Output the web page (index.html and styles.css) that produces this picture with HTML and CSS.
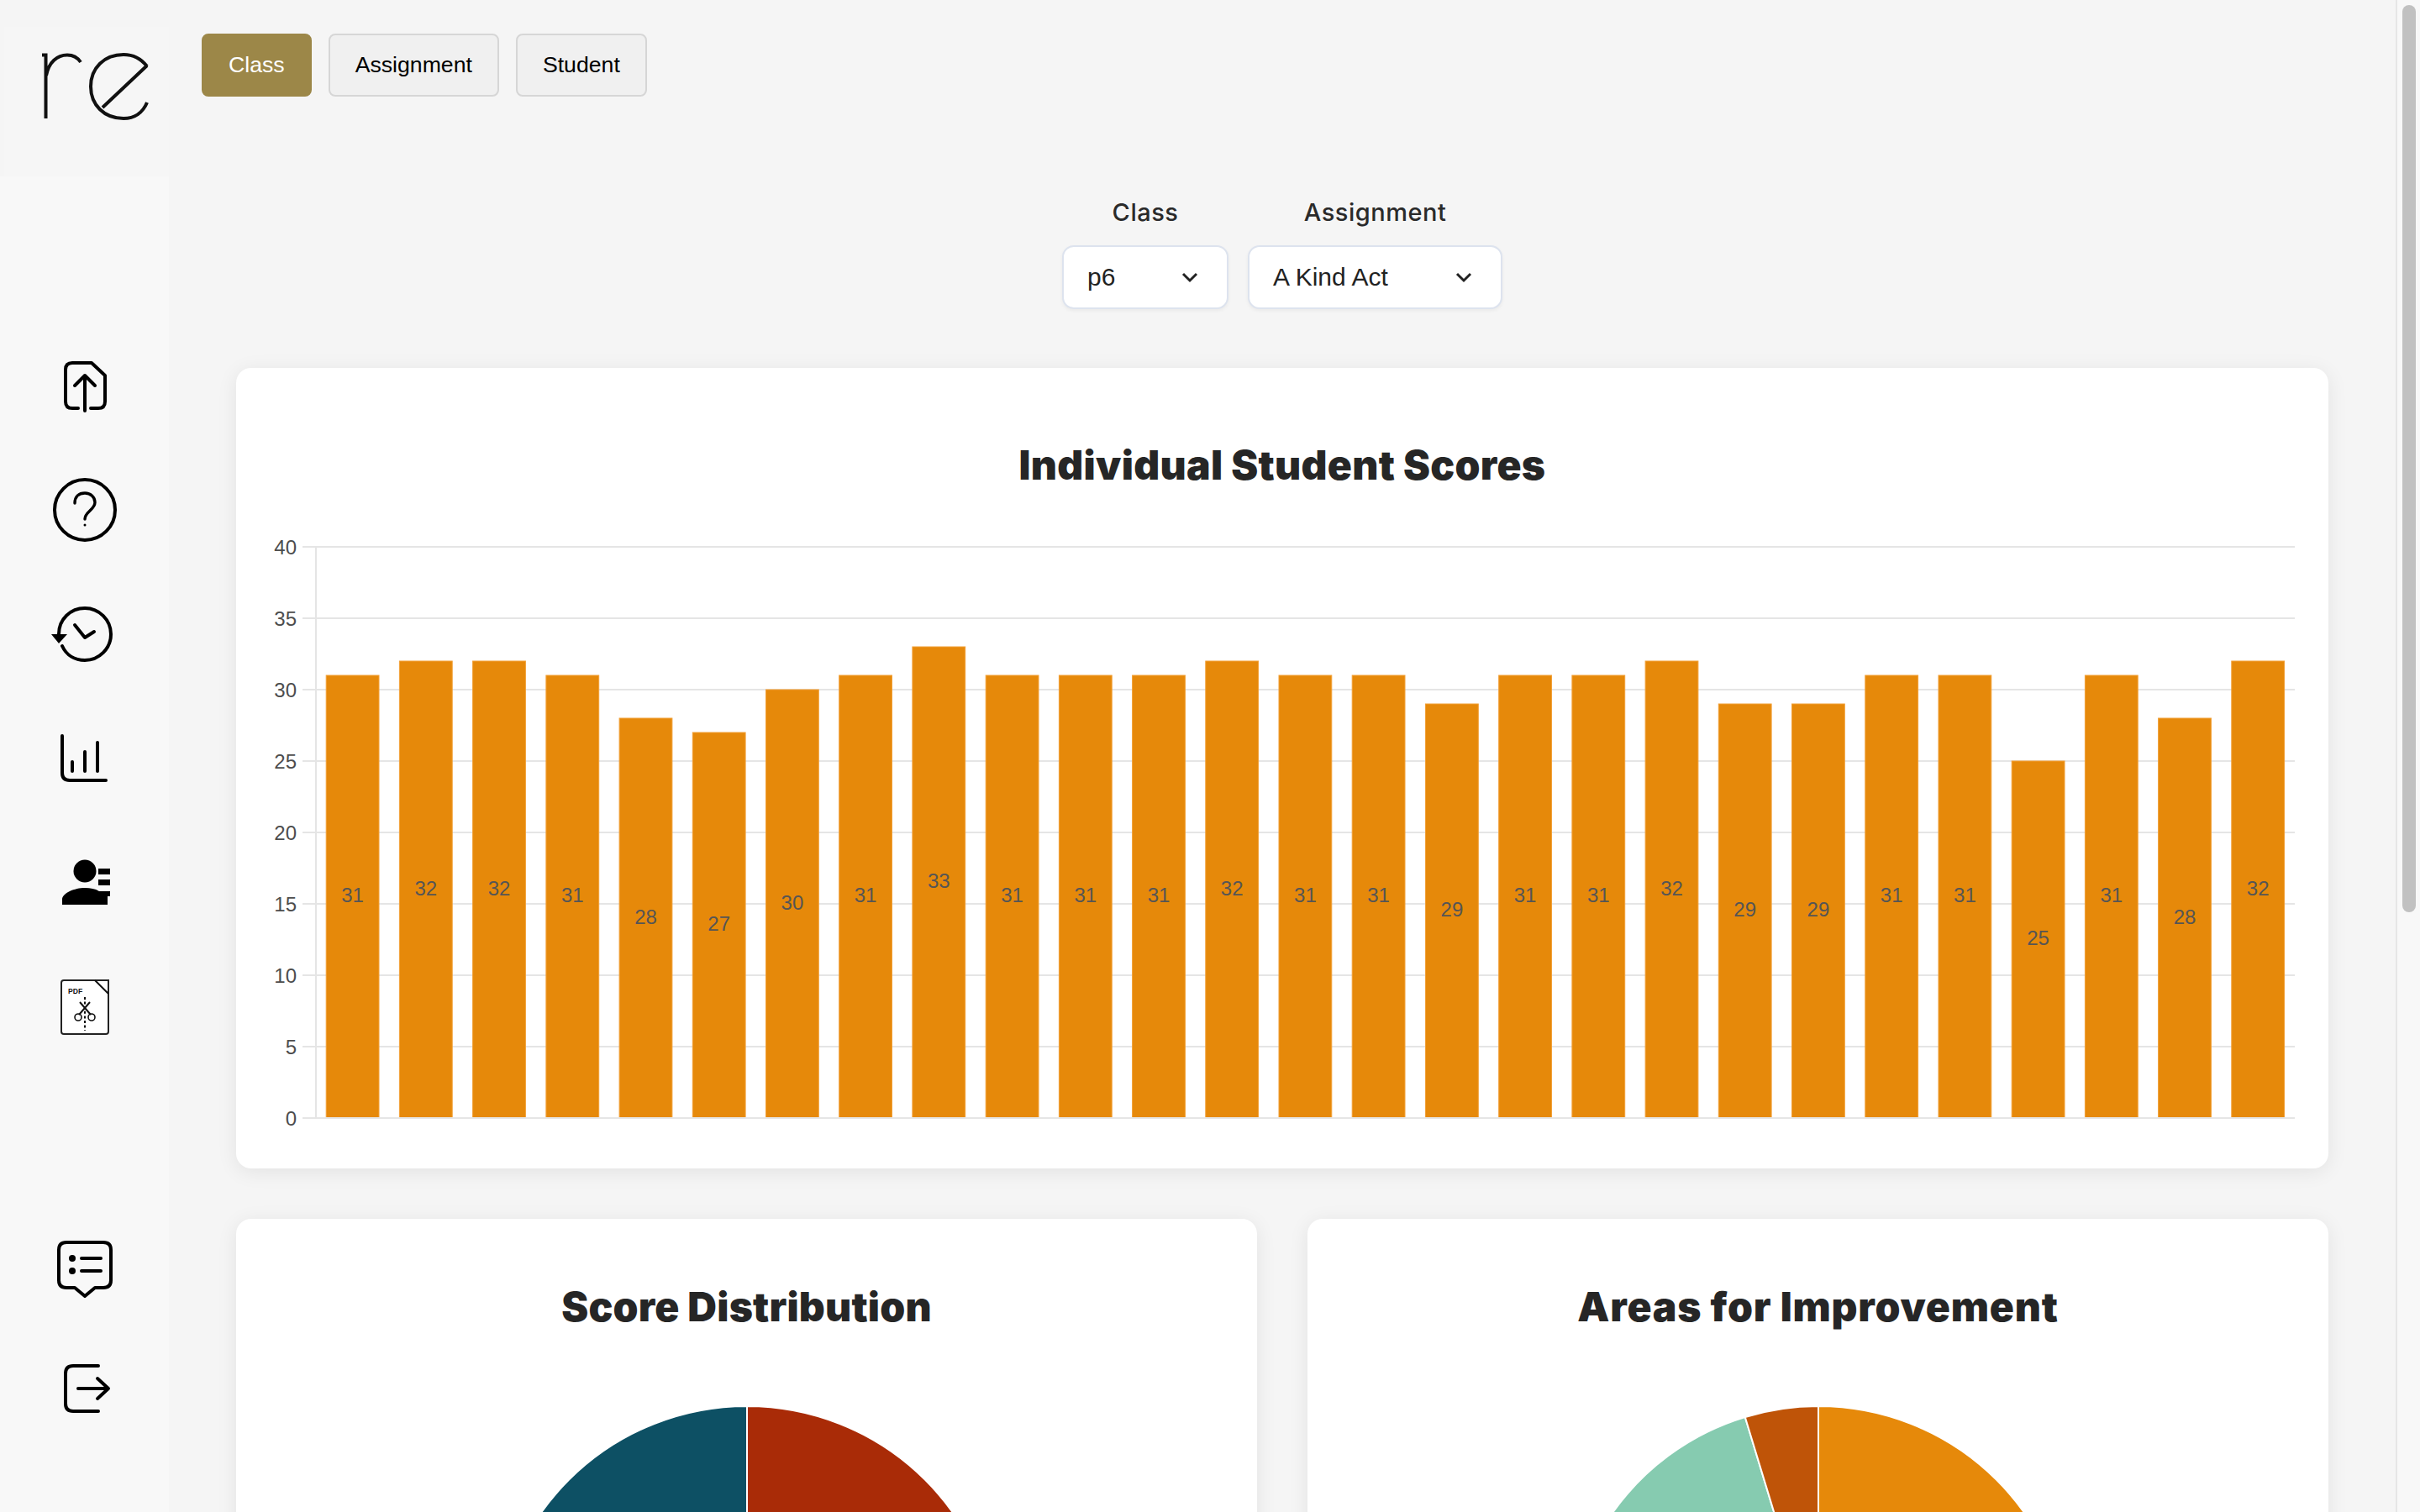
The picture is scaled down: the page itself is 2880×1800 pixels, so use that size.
FILE: index.html
```html
<!DOCTYPE html>
<html lang="en">
<head>
<meta charset="utf-8">
<title>Class Report</title>
<link rel="stylesheet" href="styles.css">
</head>
<body>
<div class="app">
  <aside class="sidebar">
    <div class="logo-box">
      <svg class="logo" viewBox="5 32 196 178" width="196" height="178" aria-label="re logo">
        <path class="logo-line" d="M54.5 141V65.5H50M55 90C58 74 68 65.5 80 65.5C87 65.5 92 68 96 74"/>
        <path class="logo-line" d="M175 79C168 70 158 65 147 65C124 65 108 81 108 103C108 125 124 141 147 141C160 141 170 134 175 122M175 78L122 128"/>
      </svg>
    </div>
    <nav class="nav-main">
      <svg class="nav-icon" viewBox="50 410 100 100"><path class="ico" d="M92 486H85Q77 486 77 478V440Q77 432 85 432H108L124 447V478Q124 486 116 486H107"/><path class="ico" d="M100 489V447M88 459L100 447L112 459"/></svg>
      <svg class="nav-icon" viewBox="50 558 100 100"><circle class="ico" cx="100" cy="607" r="36"/><path class="ico ico-thin" d="M88 599C88 591 93 587 100 587C107 587 112 592 112 598C112 607 100 609 100 618"/><circle class="ico-fill" cx="100" cy="625" r="1.5"/></svg>
      <svg class="nav-icon" viewBox="50 706 100 100"><path class="ico" d="M69 755C69 737 83 724 100 724C117 724 131 738 131 755C131 772 117 786 100 786C88 786 78 780 73 769"/><path class="ico" d="M88 744L100 759L111 752"/><path class="ico-fill" d="M60 755H79L69 766Z"/></svg>
      <svg class="nav-icon" viewBox="50 854 100 100"><path class="ico" d="M73 876V920Q73 929 82 929H125"/><path class="ico" d="M85 907V918M100 895V918M115 884V918"/></svg>
      <svg class="nav-icon" viewBox="50 1002 100 100"><circle class="ico-fill" cx="100" cy="1037" r="13.5"/><path class="ico-fill" d="M73 1077V1071C73 1063 88 1057 100 1057C107 1057 112 1058 117 1061H130V1067H127V1077Z"/><path class="ico-fill" d="M116 1034H130V1041H116ZM116 1047H130V1054H116Z"/></svg>
      <svg class="nav-icon" viewBox="50 1150 100 100">
        <path class="pdf-page" d="M75 1167H128V1228Q128 1231 125 1231H75Q72 1231 72 1228V1170Q72 1167 75 1167Z"/>
        <path class="pdf-line" d="M112 1167L128 1183"/>
        <text class="pdf-text" x="80" y="1183">PDF</text>
        <path class="pdf-dash" d="M100 1187V1227"/>
        <path class="pdf-line" d="M94 1193L107 1208M106 1193L93 1208"/>
        <circle class="pdf-ring" cx="92" cy="1211" r="4"/><circle class="pdf-ring" cx="108" cy="1211" r="4"/>
      </svg>
    </nav>
    <nav class="nav-bottom">
      <svg class="nav-icon" viewBox="50 1460 100 100"><path class="ico" d="M78 1479H122Q131 1479 131 1488V1524Q131 1533 122 1533H112L100 1543L88 1533H78Q69 1533 69 1524V1488Q69 1479 78 1479Z"/><path class="ico" d="M96 1498H119M96 1513H119"/><circle class="ico-fill" cx="85" cy="1498" r="4"/><circle class="ico-fill" cx="85" cy="1513" r="4"/></svg>
      <svg class="nav-icon" viewBox="50 1603 100 100"><path class="ico" d="M116 1626H86Q77 1626 77 1635V1671Q77 1680 86 1680H116"/><path class="ico" d="M92 1653H127M115 1641L128 1653L115 1665"/></svg>
    </nav>
  </aside>

  <main class="main">
    <div class="tabs">
      <button class="tab tab-active">Class</button>
      <button class="tab">Assignment</button>
      <button class="tab">Student</button>
    </div>

    <div class="filters">
      <div class="filter">
        <span class="filter-label">Class</span>
        <div class="select select-class"><span>p6</span>
          <svg class="chevron" viewBox="0 0 18 10"><path d="M1 1L9 9L17 1"/></svg></div>
      </div>
      <div class="filter">
        <span class="filter-label">Assignment</span>
        <div class="select select-assignment"><span>A Kind Act</span>
          <svg class="chevron" viewBox="0 0 18 10"><path d="M1 1L9 9L17 1"/></svg></div>
      </div>
    </div>

    <section class="card card-wide">
      <h2 class="card-title title-scores">Individual Student Scores</h2>
      <svg class="bar-chart" viewBox="280 600 2490 750" width="2490" height="750">
        <g class="grid">
          <path d="M359 651H2730M359 736H2730M359 821H2730M359 906H2730M359 991H2730M359 1076H2730M359 1161H2730M359 1246H2730M375 651V1331"/>
        </g>
        <g class="axis">
          <text x="352" y="659.5">40</text><text x="352" y="744.5">35</text><text x="352" y="829.5">30</text><text x="352" y="914.5">25</text><text x="352" y="999.5">20</text><text x="352" y="1084.5">15</text><text x="352" y="1169.5">10</text><text x="352" y="1254.5">5</text><text x="352" y="1339.5">0</text>
        </g>
        <g class="bars">
          <rect x="387.2" y="804" width="62.8" height="527"/><rect x="474.4" y="787" width="62.8" height="544"/><rect x="561.6" y="787" width="62.8" height="544"/><rect x="648.9" y="804" width="62.8" height="527"/><rect x="736.1" y="855" width="62.8" height="476"/><rect x="823.3" y="872" width="62.8" height="459"/><rect x="910.5" y="821" width="62.8" height="510"/><rect x="997.7" y="804" width="62.8" height="527"/><rect x="1084.9" y="770" width="62.8" height="561"/><rect x="1172.2" y="804" width="62.8" height="527"/><rect x="1259.4" y="804" width="62.8" height="527"/><rect x="1346.6" y="804" width="62.8" height="527"/><rect x="1433.8" y="787" width="62.8" height="544"/><rect x="1521" y="804" width="62.8" height="527"/><rect x="1608.2" y="804" width="62.8" height="527"/><rect x="1695.5" y="838" width="62.8" height="493"/><rect x="1782.7" y="804" width="62.8" height="527"/><rect x="1869.9" y="804" width="62.8" height="527"/><rect x="1957.1" y="787" width="62.8" height="544"/><rect x="2044.3" y="838" width="62.8" height="493"/><rect x="2131.5" y="838" width="62.8" height="493"/><rect x="2218.8" y="804" width="62.8" height="527"/><rect x="2306" y="804" width="62.8" height="527"/><rect x="2393.2" y="906" width="62.8" height="425"/><rect x="2480.4" y="804" width="62.8" height="527"/><rect x="2567.6" y="855" width="62.8" height="476"/><rect x="2654.8" y="787" width="62.8" height="544"/>
        </g>
        <g class="grid">
          <path d="M359 1331H2730"/>
        </g>
        <g class="values">
          <text x="418.6" y="1074">31</text><text x="505.8" y="1066">32</text><text x="593" y="1066">32</text><text x="680.3" y="1074">31</text><text x="767.5" y="1100">28</text><text x="854.7" y="1108">27</text><text x="941.9" y="1083">30</text><text x="1029.1" y="1074">31</text><text x="1116.3" y="1057">33</text><text x="1203.6" y="1074">31</text><text x="1290.8" y="1074">31</text><text x="1378" y="1074">31</text><text x="1465.2" y="1066">32</text><text x="1552.4" y="1074">31</text><text x="1639.6" y="1074">31</text><text x="1726.9" y="1091">29</text><text x="1814.1" y="1074">31</text><text x="1901.3" y="1074">31</text><text x="1988.5" y="1066">32</text><text x="2075.7" y="1091">29</text><text x="2162.9" y="1091">29</text><text x="2250.2" y="1074">31</text><text x="2337.4" y="1074">31</text><text x="2424.6" y="1125">25</text><text x="2511.8" y="1074">31</text><text x="2599" y="1100">28</text><text x="2686.2" y="1066">32</text>
        </g>
      </svg>
    </section>

    <div class="card-row">
      <section class="card card-half">
        <h2 class="card-title title-score">Score Distribution</h2>
        <svg class="pie" viewBox="-302 -302 604 604" width="604" height="604">
          <path class="slice slice-red" d="M0 0V-300A300 300 0 0 1 0 300Z"/>
          <path class="slice slice-blue" d="M0 0V300A300 300 0 0 1 0 -300Z"/>
        </svg>
      </section>
      <section class="card card-half">
        <h2 class="card-title title-areas">Areas for Improvement</h2>
        <svg class="pie" viewBox="-302 -302 604 604" width="604" height="604">
          <path class="slice slice-orange" d="M0 0V-300A300 300 0 0 1 0 300Z"/>
          <path class="slice slice-green" d="M0 0V300A300 300 0 0 1 -87.2 -287Z"/>
          <path class="slice slice-brown" d="M0 0L-87.2 -287A300 300 0 0 1 0 -300Z"/>
        </svg>
      </section>
    </div>
  </main>

  <div class="scrollbar"><div class="scroll-thumb"></div></div>
</div>
</body>
</html>
```

FILE: styles.css
```css
* { box-sizing: border-box; }
html, body { margin: 0; height: 100%; overflow: hidden; }
body { background: #f5f5f5; color: #222; font-family: "Liberation Sans", Arial, sans-serif; }

.app { display: flex; width: 2880px; height: 1800px; overflow: hidden; background: #f5f5f5; }

/* Sidebar */
.sidebar {
  flex: 0 0 200px; height: 1800px; display: flex; flex-direction: column;
  background: linear-gradient(#f5f5f5 0, #f5f5f5 210px, #f8f8f8 210px);
}
.logo-box { margin: 32px 0 0 5px; width: 196px; height: 178px; background: #f6f6f6; }
.logo { display: block; }
.logo-line { fill: none; stroke: #111; stroke-width: 4; }
.nav-main { display: flex; flex-direction: column; align-items: center; gap: 48px; margin-top: 200px; }
.nav-bottom { display: flex; flex-direction: column; align-items: center; gap: 43px; margin-top: auto; padding-bottom: 97px; }
.nav-icon { display: block; width: 100px; height: 100px; overflow: visible; }
.ico { fill: none; stroke: #000; stroke-width: 4; stroke-linecap: round; stroke-linejoin: round; }
.ico-thin { stroke-width: 3.4; }
.ico-fill { fill: #000; }
.pdf-page { fill: #fff; stroke: #222; stroke-width: 2; }
.pdf-line { fill: none; stroke: #111; stroke-width: 2; }
.pdf-dash { fill: none; stroke: #111; stroke-width: 2; stroke-dasharray: 3 2.6; }
.pdf-ring { fill: none; stroke: #111; stroke-width: 1.6; }
.pdf-text { font: bold 8.6px "Liberation Sans", Arial, sans-serif; fill: #111; }

/* Main column */
.main { flex: 0 0 2650px; height: 1800px; padding: 40px 80px 0; overflow: hidden; }
.tabs { display: flex; gap: 20px; margin-left: -41px; }
.tab {
  height: 75px; padding: 0 30px; border: 2px solid #d6d6d6; border-radius: 8px;
  background: #f0f0f0; color: #000; font: 26.67px "Liberation Sans", Arial, sans-serif;
}
.tab-active { background: #9c8748; border-color: #9c8748; color: #fff; }

.filters { display: flex; justify-content: center; gap: 23px; margin-top: 118px; }
.filter { display: flex; flex-direction: column; align-items: center; gap: 19px; }
.filter-label { font: 500 29px/40px Inter, "Open Sans", sans-serif; letter-spacing: .5px; color: #2a2a2a; }
.select {
  height: 76px; display: flex; align-items: center; justify-content: space-between;
  background: #fff; border: 2px solid #dde3ee; border-radius: 14px;
  box-shadow: 0 2px 4px rgba(0,0,0,.05);
  font-size: 30px; color: #222; padding-left: 28px; padding-right: 35px;
}
.select-class { width: 198px; }
.select-assignment { width: 303px; }
.chevron { width: 18px; height: 10px; display: block; overflow: visible; }
.chevron path { fill: none; stroke: #222; stroke-width: 3; }

/* Cards */
.card { background: #fff; border-radius: 18px; box-shadow: 0 4px 24px rgba(0,0,0,.08); }
.card-wide { margin-top: 70px; height: 953px; padding-top: 81px; }
.card-title { margin: 0; text-align: center; font: 900 48px/70px Inter, "Open Sans", sans-serif; color: #262626; }
.title-scores { letter-spacing: .3px; }
.title-score { letter-spacing: .2px; }
.title-areas { letter-spacing: .8px; }
.bar-chart { display: block; margin-top: 11px; }
.grid path { fill: none; stroke: #e5e5e5; stroke-width: 2; }
.axis text { font: 24px "Liberation Sans", Arial, sans-serif; fill: #4d4d4d; text-anchor: end; }
.bars rect { fill: #e6890a; stroke: #f2a037; stroke-width: 1; }
.values text { font: 24px "Liberation Sans", Arial, sans-serif; fill: #555; text-anchor: middle; }

.card-row { display: flex; gap: 60px; margin-top: 60px; }
.card-half { flex: 1 1 0; height: 1100px; padding-top: 70px; }
.pie { display: block; margin: 81px auto 0; }
.slice { stroke: #fff; stroke-width: 2; }
.slice-red { fill: #a92b07; }
.slice-blue { fill: #0d5064; }
.slice-orange { fill: #e6890a; }
.slice-green { fill: #86cbb0; }
.slice-brown { fill: #bf5408; }

/* Scrollbar */
.scrollbar {
  flex: 0 0 30px; height: 1800px; padding: 6px 6px 0 6px;
  background: #f8f8f8; border-left: 2px solid #e6e6e6; border-right: 2px solid #eee;
}
.scroll-thumb { width: 16px; height: 1080px; background: #c1c1c1; border-radius: 8px; }
```
